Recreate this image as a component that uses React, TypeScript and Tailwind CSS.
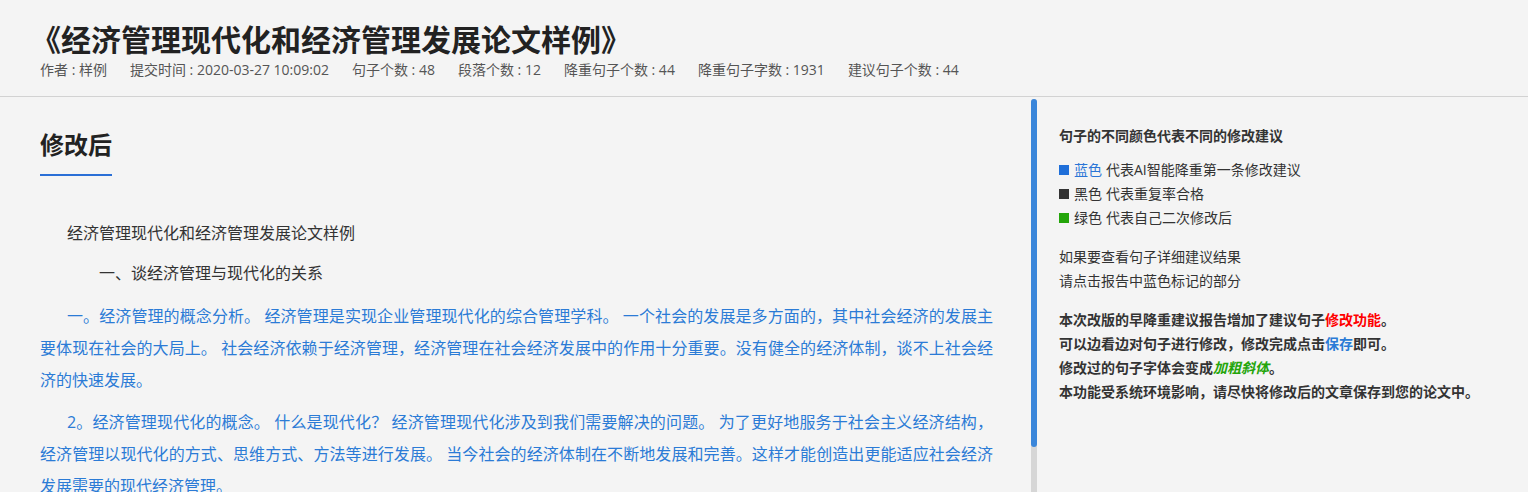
import React from 'react';

const font = { fontFamily: '"Open Sans", "Noto Sans CJK SC", sans-serif' };

const meta = [
  '作者 : 样例',
  '提交时间 : 2020-03-27 10:09:02',
  '句子个数 : 48',
  '段落个数 : 12',
  '降重句子个数 : 44',
  '降重句子字数 : 1931',
  '建议句子个数 : 44',
];

const legend = [
  { color: 'bg-[#1f6fd9]', label: '蓝色', labelColor: 'text-[#2a75d6]', text: '代表AI智能降重第一条修改建议' },
  { color: 'bg-[#333333]', label: '黑色', labelColor: 'text-[#333]', text: '代表重复率合格' },
  { color: 'bg-[#24a50a]', label: '绿色', labelColor: 'text-[#333]', text: '代表自己二次修改后' },
];

export default function App() {
  return (
    <div className="h-[492px] overflow-hidden bg-[#f4f4f4] text-[#333]" style={font}>
      {/* 顶部标题 */}
      <div className="border-b border-[#d2d2d2] pl-[40px] pt-[22px] pb-[16px]">
        <h1 className="-ml-[9px] text-[30px] font-bold leading-[36px] text-[#222]">
          《经济管理现代化和经济管理发展论文样例》
        </h1>
        <div className="mt-[2px] flex gap-[23px] text-[14px] leading-[20px] text-[#555]">
          {meta.map((m) => (
            <span key={m}>{m}</span>
          ))}
        </div>
      </div>

      <div className="flex">
        {/* 正文 */}
        <div className="w-[1031px] shrink-0 pl-[40px] pr-[38px] pt-[32px]">
          <h2 className="inline-block border-b-2 border-[#2a6fd6] pb-[13px] text-[24px] font-bold leading-[32px] text-[#222]">
            修改后
          </h2>
          <div className="mt-[41px] text-[16px] leading-[32px] text-justify">
            <p className="mb-[8px] indent-[27px] text-[#333]">经济管理现代化和经济管理发展论文样例</p>
            <p className="mb-[11px] indent-[27px] text-[#333]">　　一、谈经济管理与现代化的关系</p>
            <p className="mb-[10px] indent-[27px] text-[#2b7bd6]">
              一。经济管理的概念分析。 经济管理是实现企业管理现代化的综合管理学科。 一个社会的发展是多方面的，其中社会经济的发展主要体现在社会的大局上。 社会经济依赖于经济管理，经济管理在社会经济发展中的作用十分重要。没有健全的经济体制，谈不上社会经济的快速发展。
            </p>
            <p className="indent-[27px] text-[#2b7bd6]">
              2。经济管理现代化的概念。 什么是现代化？ 经济管理现代化涉及到我们需要解决的问题。 为了更好地服务于社会主义经济结构，经济管理以现代化的方式、思维方式、方法等进行发展。 当今社会的经济体制在不断地发展和完善。这样才能创造出更能适应社会经济发展需要的现代经济管理。
            </p>
          </div>
        </div>

        {/* 滚动条 */}
        <div className="mt-[2px] flex h-[400px] w-[6px] shrink-0 flex-col rounded-t-[3px] bg-[#d6d6d6]">
          <div className="h-[348px] rounded-[3px] bg-[#3a86da]" />
        </div>

        {/* 右侧说明 */}
        <div className="pl-[22px] pt-[27px] text-[14px] leading-[24px]">
          <div className="font-bold">句子的不同颜色代表不同的修改建议</div>
          <div className="mt-[10px]">
            {legend.map((l) => (
              <div key={l.label} className="flex items-center">
                <span className={`mr-[5px] h-[10px] w-[10px] ${l.color}`} />
                <span className={`mr-[4px] ${l.labelColor}`}>{l.label}</span>
                <span>{l.text}</span>
              </div>
            ))}
          </div>
          <div className="mt-[15px]">
            <div>如果要查看句子详细建议结果</div>
            <div>请点击报告中蓝色标记的部分</div>
          </div>
          <div className="mt-[15px] font-bold">
            <div>
              本次改版的早降重建议报告增加了建议句子<span className="text-[#ff0000]">修改功能</span>。
            </div>
            <div>
              可以边看边对句子进行修改，修改完成点击<span className="text-[#2a7bd6]">保存</span>即可。
            </div>
            <div>
              修改过的句子字体会变成<span className="italic text-[#24a50a]">加粗斜体</span>。
            </div>
            <div>本功能受系统环境影响，请尽快将修改后的文章保存到您的论文中。</div>
          </div>
        </div>
      </div>
    </div>
  );
}
